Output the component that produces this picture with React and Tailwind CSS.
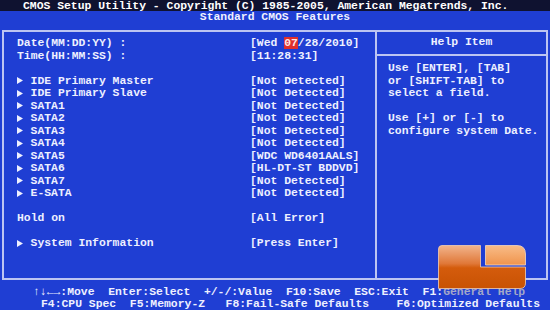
const ROWS = [
  { label: "Date(MM:DD:YY) :", value: "date" },
  { label: "Time(HH:MM:SS) :", value: "[11:28:31]" },
  null,
  { label: "IDE Primary Master", value: "[Not Detected]", arrow: true },
  { label: "IDE Primary Slave", value: "[Not Detected]", arrow: true },
  { label: "SATA1", value: "[Not Detected]", arrow: true },
  { label: "SATA2", value: "[Not Detected]", arrow: true },
  { label: "SATA3", value: "[Not Detected]", arrow: true },
  { label: "SATA4", value: "[Not Detected]", arrow: true },
  { label: "SATA5", value: "[WDC WD6401AALS]", arrow: true },
  { label: "SATA6", value: "[HL-DT-ST BDDVD]", arrow: true },
  { label: "SATA7", value: "[Not Detected]", arrow: true },
  { label: "E-SATA", value: "[Not Detected]", arrow: true },
  null,
  { label: "Hold on", value: "[All Error]" },
  null,
  { label: "System Information", value: "[Press Enter]", arrow: true },
];

function Arrow() {
  return (
    <span className="inline-flex w-[13.6px] items-center">
      <svg width="6" height="7" viewBox="0 0 6 7">
        <polygon points="0,0 6,3.5 0,7" fill="#eef0ff" />
      </svg>
    </span>
  );
}

function Logo() {
  return (
    <svg className="absolute left-[438px] top-[245px] z-10" width="88" height="44" viewBox="0 0 88 44">
      <defs>
        <linearGradient id="lg" x1="0" y1="0" x2="0" y2="1">
          <stop offset="0" stopColor="#f2b48c" />
          <stop offset="0.42" stopColor="#e07838" />
          <stop offset="0.52" stopColor="#d45c0c" />
          <stop offset="1" stopColor="#c85204" />
        </linearGradient>
        <linearGradient id="sq" x1="0" y1="0" x2="0" y2="1">
          <stop offset="0" stopColor="#f8bc88" />
          <stop offset="1" stopColor="#f0944c" />
        </linearGradient>
      </defs>
      <path d="M0.5,4 Q0.5,0.5 4,0.5 L42.5,0.5 L42.5,22 L87.5,22 L87.5,38 Q87.5,43.5 82,43.5 L0.5,43.5 Z" fill="url(#lg)" stroke="#f6cfae" strokeWidth="0.8" />
      <path d="M47.5,0.5 L79,0.5 Q87.5,0.5 87.5,9 L87.5,20 L47.5,20 Z" fill="url(#sq)" stroke="#f8d8bc" strokeWidth="0.8" />
    </svg>
  );
}

export default function App() {
  return (
    <div className="relative w-[550px] h-[310px] overflow-hidden bg-[#1f3ed3] text-[#eef0ff] font-['Liberation_Mono',monospace] font-bold text-[11.4px]">
      {/* title */}
      <div className="h-[11px] bg-[#0f1230] leading-[12px] pl-[23px] whitespace-pre text-white">
        CMOS Setup Utility - Copyright (C) 1985-2005, American Megatrends, Inc.
      </div>
      <div className="h-[13px] leading-[13px] text-center">Standard CMOS Features</div>

      {/* main box */}
      <div className="mt-[6px] mx-[2px] h-[250px] border-2 border-[#bcc4f2] flex">
        <div className="w-[373px] border-r-2 border-[#bcc4f2] pt-[5px] pl-[13px] leading-[12.5px]">
          {ROWS.map((r, i) =>
            r ? (
              <div key={i} className="flex h-[12.5px] whitespace-pre">
                <div className="w-[233px] flex">
                  {r.arrow && <Arrow />}
                  <span>{r.label}</span>
                </div>
                {r.value === "date" ? (
                  <span>
                    [Wed <span className="bg-[#e0302c] text-[#ffe6e6]">07</span>/28/2010]
                  </span>
                ) : (
                  <span>{r.value}</span>
                )}
              </div>
            ) : (
              <div key={i} className="h-[12.5px]" />
            )
          )}
        </div>
        <div className="flex-1 flex flex-col">
          <div className="h-[24px] border-b-2 border-[#bcc4f2] flex items-center justify-center">Help Item</div>
          <div className="pt-[6px] pl-[11px] leading-[12.5px] whitespace-pre">
            <div>Use [ENTER], [TAB]</div>
            <div>or [SHIFT-TAB] to</div>
            <div>select a field.</div>
            <div className="h-[12.5px]" />
            <div>Use [+] or [-] to</div>
            <div>configure system Date.</div>
          </div>
        </div>
      </div>

      {/* footer */}
      <div className="mt-[6px] leading-[12px] whitespace-pre">
        <div className="pl-[33px]">
          ↑↓←→:Move  Enter:Select  +/-/:Value  F10:Save  ESC:Exit  F1:<span className="text-[#a4a8c8]">General Help</span>
        </div>
        <div className="pl-[41px]">F4:CPU Spec  F5:Memory-Z   F8:Fail-Safe Defaults    F6:Optimized Defaults</div>
      </div>

      <Logo />
    </div>
  );
}
